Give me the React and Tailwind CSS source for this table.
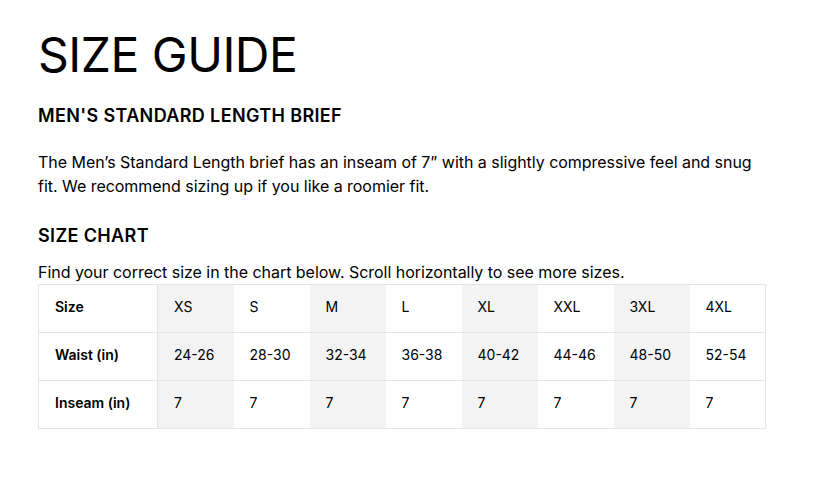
const SIZES = ["XS", "S", "M", "L", "XL", "XXL", "3XL", "4XL"];
const WAIST = ["24-26", "28-30", "32-34", "36-38", "40-42", "44-46", "48-50", "52-54"];

const ROWS = [
  { label: "Size", values: SIZES },
  { label: "Waist (in)", values: WAIST },
  { label: "Inseam (in)", values: SIZES.map(() => "7") },
];

export default function App() {
  return (
    <div className="min-h-[496px] bg-white px-[38px] pt-[26px] text-black font-['Inter','Liberation_Sans',sans-serif]">
      <h1 className="text-[48px] leading-[58px] font-normal tracking-[-0.01em]">SIZE GUIDE</h1>

      <h2 className="mt-[20px] text-[18px] leading-[24px] font-semibold tracking-[0.02em]">
        MEN'S STANDARD LENGTH BRIEF
      </h2>

      <p className="mt-[22px] max-w-[730px] text-[16px] leading-[24px] tracking-[-0.002em]">
        The Men’s Standard Length brief has an inseam of 7” with a slightly compressive feel and snug fit. We recommend sizing up if you like a roomier fit.
      </p>

      <h2 className="mt-[26px] text-[18px] leading-[24px] font-semibold tracking-[0.02em]">SIZE CHART</h2>

      <p className="mt-[12px] text-[16px] leading-[24px] tracking-[-0.002em]">
        Find your correct size in the chart below. Scroll horizontally to see more sizes.
      </p>

      <table className="border-collapse text-[14px] leading-[20px]">
        <tbody>
          {ROWS.map((row) => (
            <tr key={row.label} className="h-[48px]">
              <th className="w-[119px] border border-[#e5e5e5] pl-[16px] pb-[4px] text-left font-semibold">
                {row.label}
              </th>
              {row.values.map((v, i) => (
                <td
                  key={i}
                  className={`w-[76px] border-y border-[#e5e5e5] pl-[16px] pb-[4px] ${i % 2 === 0 ? "bg-[#f3f3f3]" : "bg-white"} ${i === row.values.length - 1 ? "border-r" : ""}`}
                >
                  {v}
                </td>
              ))}
            </tr>
          ))}
        </tbody>
      </table>
    </div>
  );
}
